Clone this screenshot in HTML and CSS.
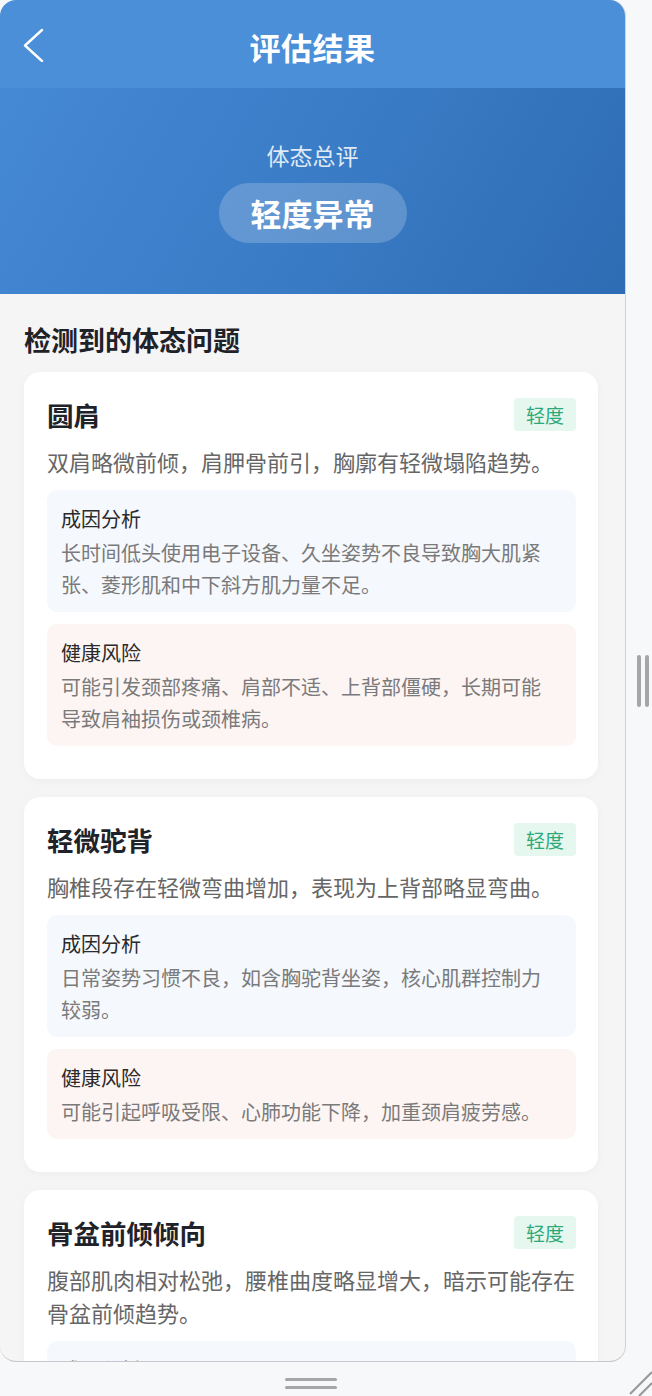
FILE: index.html
```html
<!DOCTYPE html>
<html lang="zh-CN">
<head>
<meta charset="utf-8">
<title>评估结果</title>
<link rel="stylesheet" href="styles.css">
</head>
<body>
<div class="stage">
  <div class="phone">
    <header class="navbar">
      <svg class="back" width="24" height="34" viewBox="0 0 24 34"><polyline points="20,2 3,17.5 20,33" fill="none" stroke="#ffffff" stroke-width="2.4" stroke-linecap="round" stroke-linejoin="round"/></svg>
      <h1 class="nav-title">评估结果</h1>
    </header>
    <section class="hero">
      <div class="hero-label">体态总评</div>
      <div class="hero-pill">轻度异常</div>
    </section>
    <main class="content">
      <h2 class="section-title">检测到的体态问题</h2>
      <div class="cards">
        <article class="card">
          <div class="card-head">
            <h3 class="card-title">圆肩</h3>
            <span class="badge">轻度</span>
          </div>
          <p class="card-desc">双肩略微前倾，肩胛骨前引，胸廓有轻微塌陷趋势。</p>
          <div class="box box-cause">
            <div class="box-title">成因分析</div>
            <p class="box-text">长时间低头使用电子设备、久坐姿势不良导致胸大肌紧张、菱形肌和中下斜方肌力量不足。</p>
          </div>
          <div class="box box-risk">
            <div class="box-title">健康风险</div>
            <p class="box-text">可能引发颈部疼痛、肩部不适、上背部僵硬，长期可能导致肩袖损伤或颈椎病。</p>
          </div>
        </article>
        <article class="card">
          <div class="card-head">
            <h3 class="card-title">轻微驼背</h3>
            <span class="badge">轻度</span>
          </div>
          <p class="card-desc">胸椎段存在轻微弯曲增加，表现为上背部略显弯曲。</p>
          <div class="box box-cause">
            <div class="box-title">成因分析</div>
            <p class="box-text">日常姿势习惯不良，如含胸驼背坐姿，核心肌群控制力较弱。</p>
          </div>
          <div class="box box-risk">
            <div class="box-title">健康风险</div>
            <p class="box-text">可能引起呼吸受限、心肺功能下降，加重颈肩疲劳感。</p>
          </div>
        </article>
        <article class="card">
          <div class="card-head">
            <h3 class="card-title">骨盆前倾倾向</h3>
            <span class="badge">轻度</span>
          </div>
          <p class="card-desc">腹部肌肉相对松弛，腰椎曲度略显增大，暗示可能存在骨盆前倾趋势。</p>
          <div class="box box-cause">
            <div class="box-title">成因分析</div>
          </div>
        </article>
      </div>
    </main>
  </div>
  <div class="side">
    <div class="v-grip"><span></span><span></span></div>
  </div>
</div>
<div class="bottom-bar">
  <div class="h-grip"><span></span><span></span></div>
</div>
<svg class="resize" width="24" height="26" viewBox="0 0 24 26"><line x1="2" y1="24" x2="24" y2="2" stroke="#9a9a9a" stroke-width="2.2"/><line x1="11" y1="26" x2="24" y2="13" stroke="#9a9a9a" stroke-width="2.2"/></svg>
</body>
</html>
```

FILE: styles.css
```css
* { box-sizing: border-box; }
html, body {
  margin: 0;
  padding: 0;
}
body {
  width: 652px;
  height: 1396px;
  overflow: hidden;
  background: #f7f8fa;
  font-family: "Noto Sans CJK SC", "Noto Sans", sans-serif;
  position: relative;
}
.stage {
  display: flex;
  height: 1362px;
}
.phone {
  width: 626px;
  height: 1362px;
  flex: none;
  border-radius: 16px;
  border-right: 1px solid #d2d3d6;
  border-bottom: 1px solid #c7c8cb;
  overflow: hidden;
  background: #f5f5f6;
}
.navbar {
  height: 88px;
  background: #4a8fd8;
  display: flex;
  align-items: center;
  justify-content: center;
  position: relative;
  padding-top: 6px;
}
.back {
  position: absolute;
  left: 22px;
  top: 28px;
}
.nav-title {
  margin: 0;
  color: #ffffff;
  font-size: 31px;
  font-weight: 700;
  line-height: 40px;
  letter-spacing: 0.5px;
}
.hero {
  height: 206px;
  background: linear-gradient(120deg, #4588d4 0%, #3a7cc6 50%, #2e6cb4 100%);
  display: flex;
  flex-direction: column;
  align-items: center;
  padding-top: 51px;
}
.hero-label {
  color: rgba(255, 255, 255, 0.85);
  font-size: 23px;
  line-height: 32px;
}
.hero-pill {
  margin-top: 12px;
  height: 60px;
  padding: 0 32px;
  border-radius: 30px;
  background: rgba(255, 255, 255, 0.2);
  color: #ffffff;
  font-size: 31px;
  font-weight: 700;
  line-height: 60px;
}
.content {
  padding: 27px 0 40px;
}
.section-title {
  margin: 0 0 14px 24px;
  font-size: 27px;
  line-height: 37px;
  font-weight: 700;
  color: #1f2329;
}
.cards {
  display: flex;
  flex-direction: column;
  gap: 18px;
  padding: 0 27px 0 24px;
}
.card {
  background: #ffffff;
  border-radius: 16px;
  padding: 24px 22px 33px 23px;
  box-shadow: 0 2px 10px rgba(0, 0, 0, 0.035);
}
.card-head {
  display: flex;
  align-items: center;
  justify-content: space-between;
  height: 37px;
}
.card-title {
  margin: 0;
  font-size: 26.5px;
  line-height: 37px;
  font-weight: 700;
  color: #1f2329;
}
.badge {
  height: 33px;
  line-height: 33px;
  padding: 0 12px;
  border-radius: 4px;
  background: #e5f7ef;
  color: #2ca87a;
  font-size: 19px;
}
.card-desc {
  margin: 12px 0 0;
  font-size: 22px;
  line-height: 33px;
  color: #666666;
}
.box {
  margin-top: 12px;
  border-radius: 10px;
  padding: 14px 16px 11px 14px;
}
.box-cause { background: #f5f8fd; }
.box-risk { background: #fdf5f4; }
.box-title {
  font-size: 20px;
  line-height: 30px;
  color: #2a2a2a;
  margin-bottom: 3px;
}
.box-text {
  margin: 0;
  font-size: 20px;
  line-height: 32px;
  color: #7a7a7a;
}
.side {
  flex: 1;
  display: flex;
  align-items: center;
  padding-left: 11px;
}
.v-grip {
  display: flex;
  gap: 4px;
}
.v-grip span {
  width: 4px;
  height: 52px;
  border-radius: 2px;
  background: #a6a6a6;
}
.bottom-bar {
  width: 622px;
  height: 34px;
  display: flex;
  justify-content: center;
  padding-top: 16px;
}
.h-grip {
  display: flex;
  flex-direction: column;
  gap: 5px;
}
.h-grip span {
  width: 52px;
  height: 3px;
  border-radius: 2px;
  background: #a6a6a6;
}
.resize {
  position: absolute;
  right: 0;
  bottom: 0;
}
```
